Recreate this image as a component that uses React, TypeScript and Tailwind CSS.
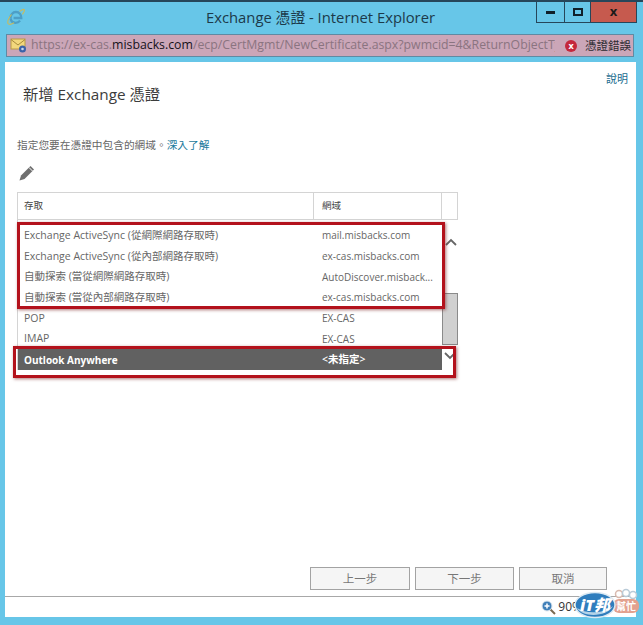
import React from "react";

const FONT = "font-['Open_Sans','Noto_Sans_CJK_TC',sans-serif]";

const rows = [
  ["Exchange ActiveSync (從網際網路存取時)", "mail.misbacks.com"],
  ["Exchange ActiveSync (從內部網路存取時)", "ex-cas.misbacks.com"],
  ["自動探索 (當從網際網路存取時)", "AutoDiscover.misback..."],
  ["自動探索 (當從內部網路存取時)", "ex-cas.misbacks.com"],
  ["POP", "EX-CAS"],
  ["IMAP", "EX-CAS"],
];

const IeIcon = () => (
  <svg width="18" height="18" viewBox="0 0 18 18" fill="none">
    <path d="M3.500 10.500c-.3-3.600 2.200-6.500 5.500-6.500 3.200 0 5.400 2.500 5.300 6H6.600" stroke="#4d9fc6" strokeWidth="2.300" />
    <path d="M3.600 10.500c.4 2.700 2.500 4.300 5 4.300 1.900 0 3.400-.8 4.500-2.200" stroke="#4d9fc6" strokeWidth="2.300" />
    <path d="M12.500 3.300C15 1.500 17 1 17.400 1.900c.3.900-.6 2.600-2 4.400M4.500 6.500C1.800 10 .3 13.800 1.100 15.600c.7 1.400 3.200.9 6-.8" stroke="#c5bb62" strokeWidth="1.200" />
  </svg>
);

const CertIcon = () => (
  <svg width="18" height="17" viewBox="0 0 18 17">
    <rect x="1" y="2" width="14" height="10" fill="#f2d77c" stroke="#b89a45" />
    <path d="M1 2.500 8 8l7-5.500" fill="none" stroke="#a88a3c" />
    <circle cx="12.500" cy="12" r="3.500" fill="#3b62a8" />
    <circle cx="12.500" cy="12" r="1.300" fill="#c7d6ee" />
  </svg>
);

const ItHelpLogo = () => (
  <svg width="66" height="36" viewBox="0 0 66 36">
    <circle cx="44" cy="9" r="3.500" fill="#fff" stroke="#d8b9ae" strokeWidth="1.500" />
    <circle cx="51" cy="8" r="3.500" fill="#fff" stroke="#b9cbd8" strokeWidth="1.500" />
    <circle cx="58" cy="10" r="3.500" fill="#fff" stroke="#b9cbd8" strokeWidth="1.500" />
    <rect x="38" y="14" width="26" height="14" rx="6" fill="#e3a18f" />
    <ellipse cx="20" cy="20" rx="20" ry="12.500" fill="#2f7dbd" />
    <ellipse cx="20" cy="20" rx="20" ry="12.500" fill="none" stroke="#dbe9f3" strokeWidth="1.500" />
    <path d="M2 23c9 6 26 6 36-2-6 11-30 12-36 2Z" fill="#b4d3e8" />
  </svg>
);

export default function App() {
  return (
    <div className={`${FONT} relative w-[643px] h-[625px] overflow-hidden bg-[#67c6e8] border-t-2 border-[#26465a] flex flex-col`} lang="zh-TW">
      {/* title bar */}
      <div className="relative h-[32px] shrink-0 flex items-center justify-center pb-[2px] pr-[2px] text-[14.800px] text-[#1c3a4a]">
        <span className="absolute left-[7px] top-[6px]"><IeIcon /></span>
        <span>Exchange 憑證 - Internet Explorer</span>
        <div className="absolute right-[6px] top-0 h-[21px] flex border border-t-0 border-[#26465a]">
          <div className="w-[28px] flex items-center justify-center border-r border-[#26465a]">
            <div className="w-[9px] h-[3px] bg-[#10202a]" />
          </div>
          <div className="w-[26px] flex items-center justify-center border-r border-[#26465a]">
            <div className="w-[10px] h-[8px] border-2 border-[#10202a]" />
          </div>
          <div className="w-[45px] bg-[#c65a4e] flex items-center justify-center text-[13px] font-bold text-[#1a1a1a]">x</div>
        </div>
      </div>

      {/* address bar */}
      <div className="ml-[6px] w-[628px] h-[23px] shrink-0 bg-[#cba6b8] border border-[#5f8aa3] flex items-center pl-[3px] text-[12.300px]">
        <CertIcon />
        <span className="ml-[3px] w-[524px] overflow-hidden whitespace-nowrap text-[#8a7480]">
          https://ex-cas.<span className="text-[#15121a]">misbacks.com</span>/ecp/CertMgmt/NewCertificate.aspx?pwmcid=4&amp;ReturnObjectTy
        </span>
        <span className="ml-[10px] w-[12px] h-[12px] rounded-full bg-[#c4283c] text-white text-[9px] font-bold leading-[12px] text-center">x</span>
        <span className="ml-[8px] text-[11.500px] text-[#2b2b30] whitespace-nowrap">憑證錯誤</span>
      </div>

      {/* page */}
      <div className="relative mt-[5px] mx-[5px] w-[631px] h-[534px] shrink-0 bg-white">
        <div className="flex justify-end pt-[9px] pr-[8px] text-[11px] leading-[15px] text-[#1a6d8f]">說明</div>
        <h1 className="-mt-[4px] ml-[18px] text-[15.300px] leading-[24px] font-normal text-[#3c3c3c]">新增 Exchange 憑證</h1>
        <p className="mt-[32px] ml-[12px] text-[10.700px] leading-[14px] text-[#666]">
          指定您要在憑證中包含的網域。<span className="text-[#1a7a9c]">深入了解</span>
        </p>
        <svg className="mt-[12px] ml-[13px]" width="18" height="18" viewBox="0 0 18 18">
          <path d="M1.500 16.500 3 11.500 12.500 2l3.500 3.500L6.500 15l-5 1.500Z" fill="#6f6f6f" />
          <path d="M11 3.500 14.500 7" stroke="#fff" strokeWidth="1" />
        </svg>

        {/* table */}
        <div className="mt-[10px] ml-[12px] w-[441px] text-[10.500px] text-[#666]">
          <div className="flex h-[28px] border border-[#d4d4d4] items-center text-[9.500px] text-[#444]">
            <div className="w-[295px] pl-[6px]">存取</div>
            <div className="w-[128px] h-full border-l border-[#d4d4d4] pl-[8px] flex items-center">網域</div>
            <div className="flex-1 h-full border-l border-[#d4d4d4]" />
          </div>
          <div className="relative flex">
            <div className="w-[425px] border-l border-[#d4d4d4] pt-[5px]">
              {rows.map(([access, domain]) => (
                <div key={access} className="flex h-[20.700px] items-center pt-[1px]">
                  <div className="w-[295px] pl-[6px] whitespace-nowrap">{access}</div>
                  <div className="pl-[9px] text-[10px] whitespace-nowrap">{domain}</div>
                </div>
              ))}
              <div className="flex h-[21px] items-center bg-[#616161] text-white font-bold pt-[1px]">
                <div className="w-[295px] pl-[6px] text-[10px]">Outlook Anywhere</div>
                <div className="pl-[9px] font-semibold">&lt;未指定&gt;</div>
              </div>
            </div>
            {/* scrollbar */}
            <div className="flex-1 flex flex-col items-center">
              <svg className="mt-[18px] ml-[1px]" width="12" height="8" viewBox="0 0 12 8">
                <path d="M1 7 6 2l5 5" fill="none" stroke="#666" strokeWidth="1.800" />
              </svg>
              <div className="mt-[47px] w-full h-[52px] bg-[#d0d0d0] border border-[#8a8a8a]" />
              <svg className="mt-[7px]" width="12" height="8" viewBox="0 0 12 8">
                <path d="M1 1l5 5 5-5" fill="none" stroke="#666" strokeWidth="1.800" />
              </svg>
            </div>
          </div>
        </div>

        {/* red highlights drawn on the screenshot */}
        <div className="absolute left-[12px] top-[160px] w-[428px] h-[87px] border-[3px] border-[#b3121c] shadow-[1px_1px_3px_rgba(120,30,30,0.6)]" />
        <div className="absolute left-[8px] top-[284px] w-[443px] h-[32px] border-[3px] border-[#b3121c] shadow-[1px_1px_3px_rgba(120,30,30,0.6)]" />

        {/* footer buttons */}
        <div className="absolute left-[305px] top-[505px] flex gap-[5px] text-[11.500px] text-[#777]">
          <button className="w-[100px] h-[23px] border border-[#a3a3a3] bg-[#f5f5f5]">上一步</button>
          <button className="w-[99px] h-[23px] border border-[#a3a3a3] bg-[#f5f5f5]">下一步</button>
          <button className="w-[88px] h-[23px] border border-[#a3a3a3] bg-[#f5f5f5]">取消</button>
        </div>
      </div>

      {/* status bar */}
      <div className="relative mx-[5px] w-[631px] h-[21px] shrink-0 bg-white border-t border-[#a8a8a8] flex items-center justify-end pr-[54px] text-[12px] text-[#333]">
        <svg width="15" height="15" viewBox="0 0 15 15" className="mr-[2px]">
          <path d="m9 9 5 5" stroke="#7a6a50" strokeWidth="2" />
          <circle cx="6" cy="6" r="5" fill="#3f7fb8" stroke="#dfe8ef" />
          <path d="M3.500 6h5M6 3.500v5" stroke="#fff" strokeWidth="1.500" />
        </svg>
        <span>90%</span>
      </div>

      <div className="absolute left-[575px] top-[583px]">
        <ItHelpLogo />
        <span className="absolute left-[5px] top-[10px] text-[16px] leading-[20px] font-extrabold italic text-white whitespace-nowrap">iT邦</span>
        <span className="absolute left-[41px] top-[15px] text-[10px] leading-[12px] font-bold text-white whitespace-nowrap">幫忙</span>
      </div>
    </div>
  );
}
